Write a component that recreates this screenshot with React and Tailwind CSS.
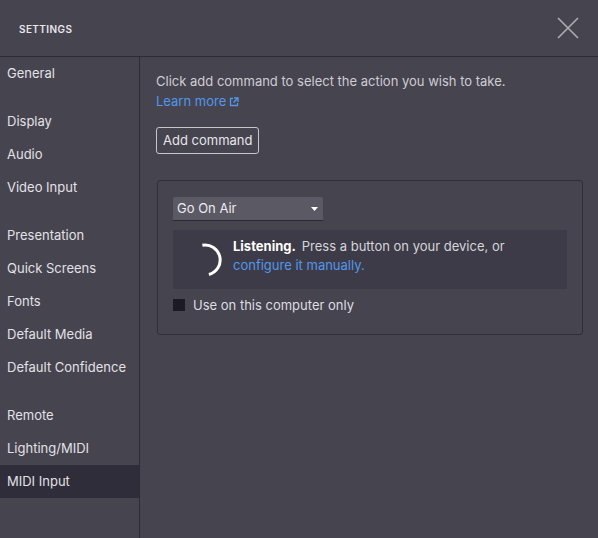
import React from "react";

const groups = [
  ["General"],
  ["Display", "Audio", "Video Input"],
  ["Presentation", "Quick Screens", "Fonts", "Default Media", "Default Confidence"],
  ["Remote", "Lighting/MIDI", "MIDI Input"],
];

const ACTIVE = "MIDI Input";

function CloseIcon() {
  return (
    <svg width="22" height="22" viewBox="0 0 22 22" fill="none">
      <path d="M1 1L21 21M21 1L1 21" stroke="#aeadb4" strokeWidth="1.6" />
    </svg>
  );
}

function ExternalIcon() {
  return (
    <svg width="10" height="10" viewBox="0 0 10 10" fill="none" className="ml-[3px] mt-[1px]">
      <path d="M4 1.5H1.5V8.5H8.5V6" stroke="#5197ec" strokeWidth="1.3" />
      <path d="M5 1H9V5" stroke="#5197ec" strokeWidth="1.3" />
      <path d="M9 1L4.5 5.5" stroke="#5197ec" strokeWidth="1.5" />
    </svg>
  );
}

function Spinner() {
  return (
    <svg width="36" height="36" viewBox="0 0 36 36" fill="none" className="ml-[14px] shrink-0 self-center">
      <path d="M15.4 3.23A15 15 0 0 1 21.9 32.5" stroke="#ffffff" strokeWidth="3" />
    </svg>
  );
}

export default function App() {
  return (
    <div className="w-[598px] h-[538px] bg-[#46444f] flex flex-col overflow-hidden font-['Inter',sans-serif] text-[13px] text-[#e2e1e6]">
      <header className="h-[57px] shrink-0 border-b border-[#2d2c36] flex items-center justify-between pl-[19px] pr-[19px]">
        <span className="text-[10px] font-semibold tracking-[0.04em] text-[#e8e7ec] mt-[2px]">SETTINGS</span>
        <CloseIcon />
      </header>
      <div className="flex flex-1 min-h-0">
        <nav className="w-[140px] shrink-0 border-r border-[#2d2c36] flex flex-col gap-[15px]">
          {groups.map((g, i) => (
            <div key={i} className="flex flex-col">
              {g.map((item) => (
                <div
                  key={item}
                  className={
                    item === ACTIVE
                      ? "h-[33px] flex items-center px-[7px] bg-[#2e2d39] whitespace-nowrap"
                      : "h-[33px] flex items-center px-[7px] whitespace-nowrap"
                  }
                >
                  {item}
                </div>
              ))}
            </div>
          ))}
        </nav>
        <main className="flex-1 pl-[16px] pr-[15px] pt-[14px]">
          <p className="leading-[20px] text-[#cfcdd4]">Click add command to select the action you wish to take.</p>
          <a className="leading-[20px] text-[#5197ec] flex items-center w-fit">
            Learn more
            <ExternalIcon />
          </a>
          <button className="mt-[16px] h-[27px] px-[6px] border border-[#c6c5cb] rounded-[3px] text-[#e6e5ea] leading-none">
            Add command
          </button>
          <section className="mt-[26px] ml-[1px] border border-[#302e39] rounded-[3px] pt-[16px] px-[15px] pb-[20px]">
            <div className="w-[150px] h-[24px] bg-[#5b5964] rounded-t-[2px] border-b border-[#2a2833] flex items-center justify-between pl-[4px] pr-[5px] text-[#ecebf0]">
              <span>Go On Air</span>
              <svg width="7" height="4" viewBox="0 0 7 4">
                <path d="M0 0H7L3.5 4Z" fill="#ffffff" />
              </svg>
            </div>
            <div className="mt-[9px] h-[59px] bg-[#3d3b47] flex">
              <Spinner />
              <div className="ml-[10px] pt-[7px] leading-[19px] text-[#d6d5da]">
                <div>
                  <span className="font-bold text-white">Listening.</span>
                  <span className="ml-[6px]">Press a button on your device, or</span>
                </div>
                <div className="text-[#5197ec]">configure it manually.</div>
              </div>
            </div>
            <label className="mt-[7px] flex items-center gap-[8px] leading-[18px] text-[#dedde2]">
              <span className="w-[12px] h-[12px] bg-[#1c1a24] shrink-0" />
              Use on this computer only
            </label>
          </section>
        </main>
      </div>
    </div>
  );
}
